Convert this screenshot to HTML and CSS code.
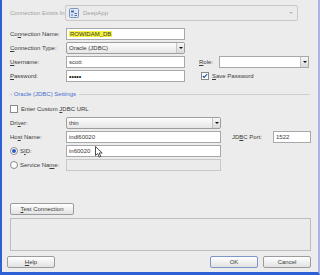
FILE: index.html
```
<!DOCTYPE html>
<html lang="en">

<head>
    <meta charset="UTF-8">
    <title>Create Database Connection</title>
    <link rel="stylesheet" href="styles.css">
</head>

<body>
    <div class="dialog">
        <!-- top: where the connection lives -->
        <div class="row row-top">
            <span class="lbl dim">Connection Exists In:</span>
            <div class="combo combo-off combo-app">
                <svg class="app-icon" viewBox="0 0 10 10">
                    <rect x="0.5" y="0.5" width="9" height="9" rx="1" fill="#dfe8f6" stroke="#7d95bd"/>
                    <rect x="2" y="2.5" width="3" height="2" fill="#4d6fa8"/>
                    <path d="M5.5 5.5h2.5M5.5 7.5h2.5M2 7h2" stroke="#4d6fa8" stroke-width="1"/>
                </svg>
                <span class="dim">DeepApp</span>
                <span class="arrow arrow-off"></span>
            </div>
        </div>

        <div class="row">
            <span class="lbl">Co<u>n</u>nection Name:</span>
            <div class="field f-main"><span class="hl">ROWIDAM_DB</span></div>
        </div>

        <div class="row">
            <span class="lbl"><u>C</u>onnection Type:</span>
            <div class="combo f-main">Oracle (JDBC)<span class="arrow"></span></div>
        </div>

        <div class="row">
            <span class="lbl"><u>U</u>sername:</span>
            <div class="field f-main">scott</div>
            <span class="lbl-mid"><u>R</u>ole:</span>
            <div class="field f-role"><span class="arrow"></span></div>
        </div>

        <div class="row">
            <span class="lbl"><u>P</u>assword:</span>
            <div class="field f-main dots">&#8226;&#8226;&#8226;&#8226;&#8226;</div>
            <label class="check check-save">
                <span class="box checked">
                    <svg viewBox="0 0 7 7"><path d="M1 3.5l1.6 1.7L6 1.3" fill="none" stroke="#2150b8" stroke-width="1.3"/></svg>
                </span>
                <span><u>S</u>ave Password</span>
            </label>
        </div>

        <!-- oracle settings group -->
        <div class="group-title">
            <span>- Oracle (JDBC) Settings</span>
            <span class="group-line"></span>
        </div>

        <div class="row row-url">
            <label class="check">
                <span class="box"></span>
                <span>Enter Custom <u>J</u>DBC URL</span>
            </label>
        </div>

        <div class="row">
            <span class="lbl">Dri<u>v</u>er:</span>
            <div class="combo f-long">thin<span class="arrow"></span></div>
        </div>

        <div class="row">
            <span class="lbl">Ho<u>s</u>t Name:</span>
            <div class="field f-long">indl60020</div>
            <span class="lbl-port">JD<u>B</u>C Port:</span>
            <div class="field f-port">1522</div>
        </div>

        <div class="row">
            <span class="lbl"><span class="radio on"></span>S<u>I</u>D:</span>
            <div class="field f-long">in60020</div>
        </div>

        <div class="row">
            <span class="lbl"><span class="radio"></span>Service Na<u>m</u>e:</span>
            <div class="field f-long field-off"></div>
        </div>

        <div class="spacer"></div>

        <button class="btn btn-test"><u>T</u>est Connection</button>
        <div class="status-box"></div>

        <div class="footer">
            <button class="btn"><u>H</u>elp</button>
            <div class="footer-right">
                <button class="btn btn-ok">OK</button>
                <button class="btn">Cancel</button>
            </div>
        </div>

        <!-- mouse pointer over the SID field -->
        <svg class="pointer" viewBox="0 0 8 12">
            <path d="M0.5 0.5v9l2.2-2 1.6 3.6 1.5-0.7-1.6-3.4h3z" fill="#fff" stroke="#222" stroke-width="0.8"/>
        </svg>
    </div>
</body>

</html>
```

FILE: styles.css
```
* {
    margin: 0;
    padding: 0;
    box-sizing: border-box;
}

body {
    width: 320px;
    height: 275px;
    overflow: hidden;
    background-color: #ececec;
    font-family: "Liberation Sans", Arial, sans-serif;
    font-size: 6px;
    color: #3a3a3a;
}

.dialog {
    position: relative;
    height: 275px;
    display: flex;
    flex-direction: column;
    padding: 0 7px 0 8px;
    border-left: 2px solid #2d5fd6;
    border-right: 2px solid #a9b3e6;
    border-bottom: 3px solid #2d5fd6;
}

u {
    text-decoration: underline;
    text-underline-offset: 1px;
}

.dim {
    color: #a2a2a2;
}

.row {
    display: flex;
    align-items: center;
    height: 12px;
    margin-top: 2px;
}

.row-top {
    height: 16px;
    margin-top: 5px;
    margin-bottom: 5px;
}

.lbl {
    width: 56px;
    flex-shrink: 0;
    display: flex;
    align-items: center;
    white-space: nowrap;
}

.lbl-mid {
    width: 20px;
    margin-left: 14px;
}

.lbl-port {
    width: 41px;
    margin-left: 11px;
}

.field,
.combo {
    position: relative;
    height: 12px;
    display: flex;
    align-items: center;
    padding-left: 2px;
    border: 1px solid #a8a8a8;
    background-color: #fff;
    white-space: nowrap;
}

.combo {
    border-radius: 2px;
    background: linear-gradient(#fdfdfd, #e6e6e6);
    border-color: #9e9e9e;
}

.combo-app {
    width: 233px;
    height: 16px;
    margin-left: -1px;
    padding-left: 3px;
    gap: 4px;
    background: #ebebeb;
    border-color: #c9c9c9;
}

.app-icon {
    width: 10px;
    height: 10px;
}

.f-main {
    width: 119px;
}

.f-role {
    width: 90px;
}

.f-long {
    width: 155px;
}

.f-port {
    width: 38px;
}

.field-off {
    background-color: #ebebeb;
    border-color: #c8c8c8;
}

.hl {
    background-color: #f3f23a;
    padding: 0 1px;
}

.dots {
    font-size: 7px;
    color: #111;
}

.arrow {
    position: absolute;
    right: 0;
    top: 0;
    bottom: 0;
    width: 8px;
    background: linear-gradient(#f6f6f6, #d9d9d9);
    border-left: 1px solid #c4c4c4;
}

.arrow::after {
    content: "";
    position: absolute;
    left: 2px;
    top: 4px;
    border-left: 2px solid transparent;
    border-right: 2px solid transparent;
    border-top: 2px solid #111;
}

.arrow-off {
    width: 10px;
    background: none;
    border-left: none;
}

.arrow-off::after {
    top: 6px;
    border-top-color: #b8b8b8;
}

.check {
    display: flex;
    align-items: center;
    gap: 3px;
}

.check-save {
    margin-left: 16px;
}

.box {
    width: 8px;
    height: 8px;
    border: 1px solid #8a8a8a;
    background-color: #fff;
    display: flex;
}

.box svg {
    width: 6px;
    height: 6px;
}

.radio {
    width: 8px;
    height: 8px;
    margin-right: 2px;
    border: 1px solid #8a8a8a;
    border-radius: 50%;
    background-color: #fff;
    display: flex;
    align-items: center;
    justify-content: center;
}

.radio.on::after {
    content: "";
    width: 4px;
    height: 4px;
    border-radius: 50%;
    background-color: #2f5cc8;
}

.group-title {
    display: flex;
    align-items: center;
    gap: 3px;
    margin: 7px 0 0 0;
    height: 10px;
    color: #4a6fd0;
}

.group-line {
    flex: 1;
    height: 1px;
    margin-right: 1px;
    background-color: #cfcfcf;
}

.row-url {
    margin-top: 4px;
}

.spacer {
    flex: 1;
}

.btn {
    height: 12px;
    width: 48px;
    font-family: inherit;
    font-size: 6px;
    color: #3a3a3a;
    border: 1px solid #9c9c9c;
    border-radius: 2px;
    background: linear-gradient(#ffffff, #e2e2e2);
}

.btn-test {
    width: 64px;
    margin-bottom: 3px;
}

.btn-ok {
    border-color: #7d95c8;
}

.status-box {
    width: 301px;
    height: 33px;
    border: 1px solid #bdbdbd;
    background-color: #ebebeb;
}

.footer {
    display: flex;
    justify-content: space-between;
    margin: 5px 0 4px -3px;
}

.footer-right {
    display: flex;
    gap: 5px;
}

.pointer {
    position: absolute;
    left: 93px;
    top: 146px;
    width: 8px;
    height: 12px;
}
```
